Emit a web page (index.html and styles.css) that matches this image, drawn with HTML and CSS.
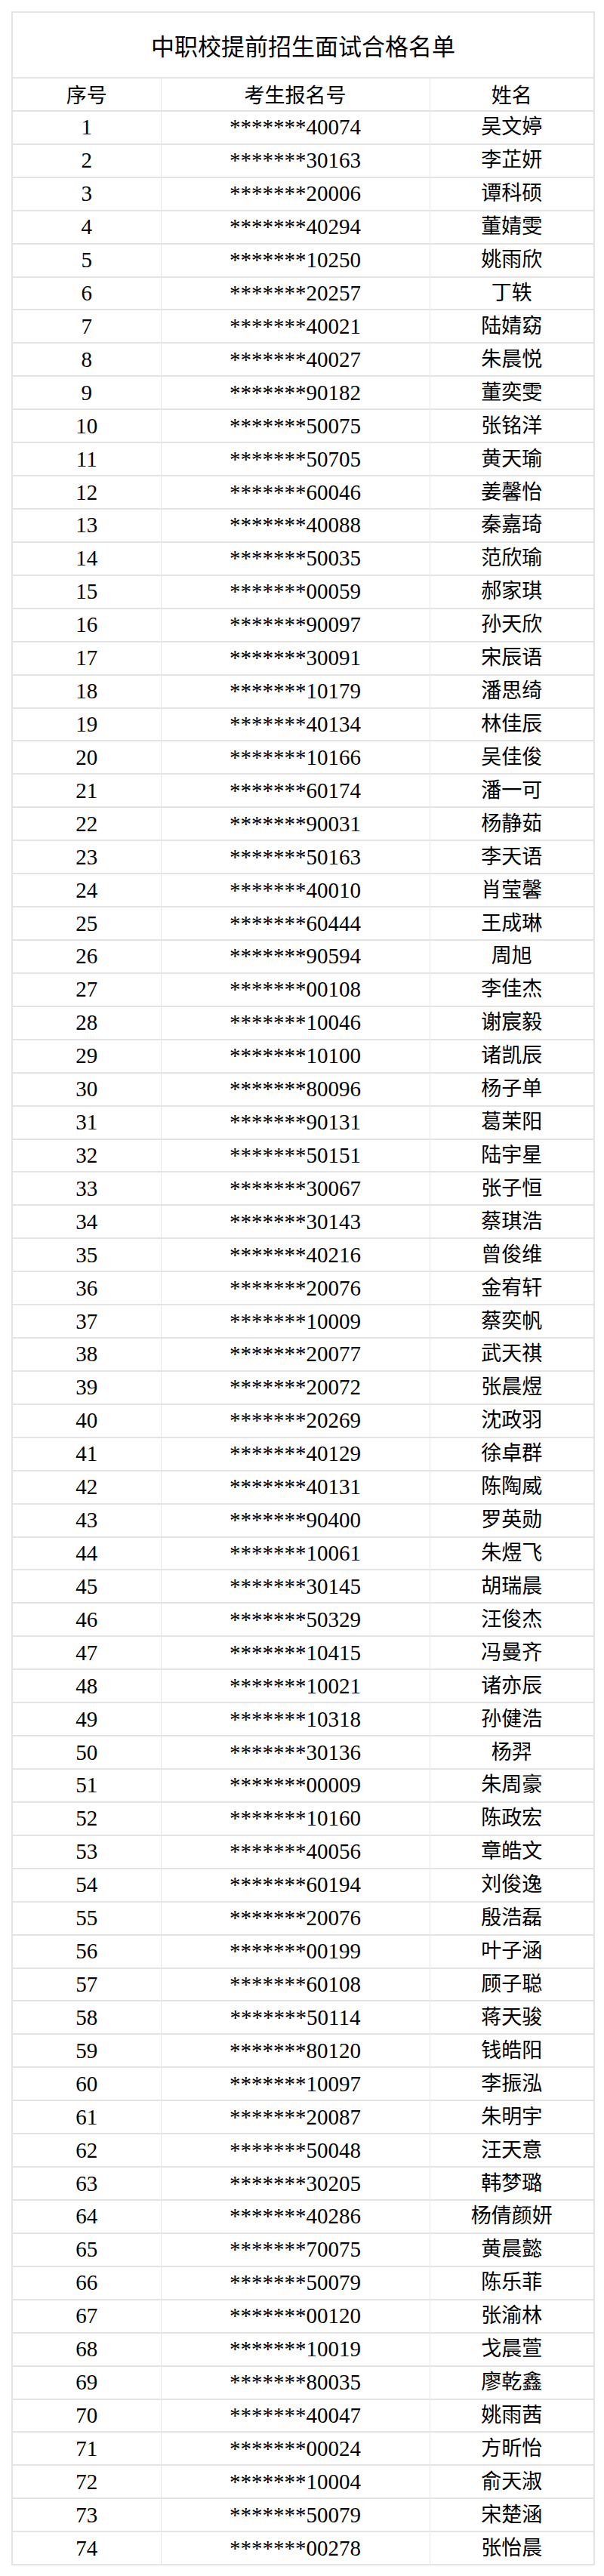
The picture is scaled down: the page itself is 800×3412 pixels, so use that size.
FILE: index.html
```html
<!DOCTYPE html>
<html lang="zh-CN">
<head>
    <meta charset="UTF-8">
    <meta name="viewport" content="width=device-width, initial-scale=1.0">
    <title>中职校提前招生面试合格名单</title>
    <link rel="stylesheet" href="styles.css">
</head>
<body>

    <!-- 合格名单表 -->
    <table class="list">
        <colgroup>
            <col class="col-no">
            <col class="col-id">
            <col class="col-name">
        </colgroup>
        <tr class="title-row">
            <td colspan="3">中职校提前招生面试合格名单</td>
        </tr>
        <tr class="head-row">
            <td>序号</td>
            <td>考生报名号</td>
            <td>姓名</td>
        </tr>
        <tr><td>1</td><td>*******40074</td><td class="name">吴文婷</td></tr>
        <tr><td>2</td><td>*******30163</td><td class="name">李芷妍</td></tr>
        <tr><td>3</td><td>*******20006</td><td class="name">谭科硕</td></tr>
        <tr><td>4</td><td>*******40294</td><td class="name">董婧雯</td></tr>
        <tr><td>5</td><td>*******10250</td><td class="name">姚雨欣</td></tr>
        <tr><td>6</td><td>*******20257</td><td class="name">丁轶</td></tr>
        <tr><td>7</td><td>*******40021</td><td class="name">陆婧窈</td></tr>
        <tr><td>8</td><td>*******40027</td><td class="name">朱晨悦</td></tr>
        <tr><td>9</td><td>*******90182</td><td class="name">董奕雯</td></tr>
        <tr><td>10</td><td>*******50075</td><td class="name">张铭洋</td></tr>
        <tr><td>11</td><td>*******50705</td><td class="name">黄天瑜</td></tr>
        <tr><td>12</td><td>*******60046</td><td class="name">姜馨怡</td></tr>
        <tr><td>13</td><td>*******40088</td><td class="name">秦嘉琦</td></tr>
        <tr><td>14</td><td>*******50035</td><td class="name">范欣瑜</td></tr>
        <tr><td>15</td><td>*******00059</td><td class="name">郝家琪</td></tr>
        <tr><td>16</td><td>*******90097</td><td class="name">孙天欣</td></tr>
        <tr><td>17</td><td>*******30091</td><td class="name">宋辰语</td></tr>
        <tr><td>18</td><td>*******10179</td><td class="name">潘思绮</td></tr>
        <tr><td>19</td><td>*******40134</td><td class="name">林佳辰</td></tr>
        <tr><td>20</td><td>*******10166</td><td class="name">吴佳俊</td></tr>
        <tr><td>21</td><td>*******60174</td><td class="name">潘一可</td></tr>
        <tr><td>22</td><td>*******90031</td><td class="name">杨静茹</td></tr>
        <tr><td>23</td><td>*******50163</td><td class="name">李天语</td></tr>
        <tr><td>24</td><td>*******40010</td><td class="name">肖莹馨</td></tr>
        <tr><td>25</td><td>*******60444</td><td class="name">王成琳</td></tr>
        <tr><td>26</td><td>*******90594</td><td class="name">周旭</td></tr>
        <tr><td>27</td><td>*******00108</td><td class="name">李佳杰</td></tr>
        <tr><td>28</td><td>*******10046</td><td class="name">谢宸毅</td></tr>
        <tr><td>29</td><td>*******10100</td><td class="name">诸凯辰</td></tr>
        <tr><td>30</td><td>*******80096</td><td class="name">杨子单</td></tr>
        <tr><td>31</td><td>*******90131</td><td class="name">葛茉阳</td></tr>
        <tr><td>32</td><td>*******50151</td><td class="name">陆宇星</td></tr>
        <tr><td>33</td><td>*******30067</td><td class="name">张子恒</td></tr>
        <tr><td>34</td><td>*******30143</td><td class="name">蔡琪浩</td></tr>
        <tr><td>35</td><td>*******40216</td><td class="name">曾俊维</td></tr>
        <tr><td>36</td><td>*******20076</td><td class="name">金宥轩</td></tr>
        <tr><td>37</td><td>*******10009</td><td class="name">蔡奕帆</td></tr>
        <tr><td>38</td><td>*******20077</td><td class="name">武天祺</td></tr>
        <tr><td>39</td><td>*******20072</td><td class="name">张晨煜</td></tr>
        <tr><td>40</td><td>*******20269</td><td class="name">沈政羽</td></tr>
        <tr><td>41</td><td>*******40129</td><td class="name">徐卓群</td></tr>
        <tr><td>42</td><td>*******40131</td><td class="name">陈陶威</td></tr>
        <tr><td>43</td><td>*******90400</td><td class="name">罗英勋</td></tr>
        <tr><td>44</td><td>*******10061</td><td class="name">朱煜飞</td></tr>
        <tr><td>45</td><td>*******30145</td><td class="name">胡瑞晨</td></tr>
        <tr><td>46</td><td>*******50329</td><td class="name">汪俊杰</td></tr>
        <tr><td>47</td><td>*******10415</td><td class="name">冯曼齐</td></tr>
        <tr><td>48</td><td>*******10021</td><td class="name">诸亦辰</td></tr>
        <tr><td>49</td><td>*******10318</td><td class="name">孙健浩</td></tr>
        <tr><td>50</td><td>*******30136</td><td class="name">杨羿</td></tr>
        <tr><td>51</td><td>*******00009</td><td class="name">朱周豪</td></tr>
        <tr><td>52</td><td>*******10160</td><td class="name">陈政宏</td></tr>
        <tr><td>53</td><td>*******40056</td><td class="name">章皓文</td></tr>
        <tr><td>54</td><td>*******60194</td><td class="name">刘俊逸</td></tr>
        <tr><td>55</td><td>*******20076</td><td class="name">殷浩磊</td></tr>
        <tr><td>56</td><td>*******00199</td><td class="name">叶子涵</td></tr>
        <tr><td>57</td><td>*******60108</td><td class="name">顾子聪</td></tr>
        <tr><td>58</td><td>*******50114</td><td class="name">蒋天骏</td></tr>
        <tr><td>59</td><td>*******80120</td><td class="name">钱皓阳</td></tr>
        <tr><td>60</td><td>*******10097</td><td class="name">李振泓</td></tr>
        <tr><td>61</td><td>*******20087</td><td class="name">朱明宇</td></tr>
        <tr><td>62</td><td>*******50048</td><td class="name">汪天意</td></tr>
        <tr><td>63</td><td>*******30205</td><td class="name">韩梦璐</td></tr>
        <tr><td>64</td><td>*******40286</td><td class="name">杨倩颜妍</td></tr>
        <tr><td>65</td><td>*******70075</td><td class="name">黄晨懿</td></tr>
        <tr><td>66</td><td>*******50079</td><td class="name">陈乐菲</td></tr>
        <tr><td>67</td><td>*******00120</td><td class="name">张渝林</td></tr>
        <tr><td>68</td><td>*******10019</td><td class="name">戈晨萱</td></tr>
        <tr><td>69</td><td>*******80035</td><td class="name">廖乾鑫</td></tr>
        <tr><td>70</td><td>*******40047</td><td class="name">姚雨茜</td></tr>
        <tr><td>71</td><td>*******00024</td><td class="name">方昕怡</td></tr>
        <tr><td>72</td><td>*******10004</td><td class="name">俞天淑</td></tr>
        <tr><td>73</td><td>*******50079</td><td class="name">宋楚涵</td></tr>
        <tr><td>74</td><td>*******00278</td><td class="name">张怡晨</td></tr>
    </table>

</body>
</html>
```

FILE: styles.css
```css
/* Page */
body {
    margin: 0;
    padding: 15px 0 0 15px;
    background-color: #fff;
    color: #000;
    font-family: "Liberation Serif", "Noto Sans CJK SC", serif;
}

/* Table */
.list {
    border-collapse: collapse;
    table-layout: fixed;
    width: 771px;
    border: 2px solid #e4e4e4;
}

.col-no {
    width: 197px;
}

.col-id {
    width: 356px;
}

.col-name {
    width: 218px;
}

.list td {
    height: 41.93px;
    padding: 0;
    text-align: center;
    vertical-align: middle;
    font-size: 29px;
    line-height: 1;
    border-top: 2px solid #e4e4e4;
    border-bottom: 2px solid #e4e4e4;
    border-left: 1px solid #e6e6e6;
    border-right: 1px solid #e6e6e6;
    white-space: nowrap;
}

.list td.name {
    font-size: 27px;
}

/* Title */
.title-row td {
    height: 85px;
    font-size: 31px;
    font-family: "Noto Sans CJK SC", sans-serif;
}

/* Column heads */
.head-row td {
    font-size: 27px;
    font-family: "Noto Sans CJK SC", sans-serif;
}
```
